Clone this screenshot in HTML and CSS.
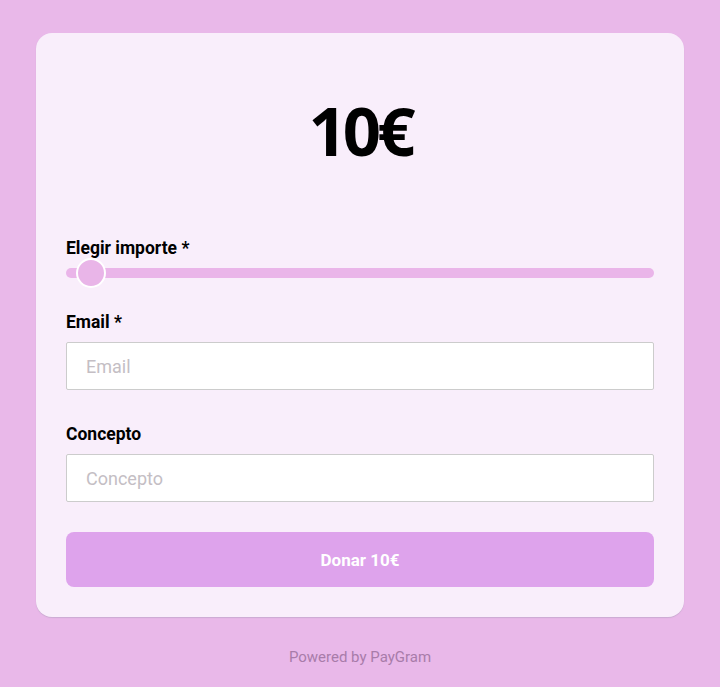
FILE: index.html
```html
<!DOCTYPE html>
<html lang="es">
<head>
    <meta charset="UTF-8">
    <meta name="viewport" content="width=device-width, initial-scale=1.0">
    <title>Donar</title>
    <link rel="stylesheet" href="styles.css">
</head>
<body>
    <div class="page">
        <form class="card">
            <h1 class="amount">10€</h1>

            <label class="field-label" for="importe">Elegir importe *</label>
            <input type="range" id="importe" class="slider" min="1" max="500" value="10">

            <label class="field-label" for="email">Email *</label>
            <input type="email" id="email" class="text-input" placeholder="Email">

            <label class="field-label" for="concepto">Concepto</label>
            <input type="text" id="concepto" class="text-input" placeholder="Concepto">

            <button type="button" class="donate-button">Donar 10€</button>
        </form>
        <p class="powered">Powered by PayGram</p>
    </div>
</body>
</html>
```

FILE: styles.css
```css
body {
    margin: 0;
    background-color: #e9b8e9;
    font-family: Roboto, "Liberation Sans", sans-serif;
}
.page {
    padding-top: 33px;
}
.card {
    display: flex;
    flex-direction: column;
    width: 648px;
    box-sizing: border-box;
    margin: 0 auto;
    padding: 61px 30px 30px;
    background-color: #f9eefb;
    border-radius: 16px;
    box-shadow: 0 1px 1px rgba(150, 150, 170, 0.35);
}
.amount {
    margin: 0 0 72px;
    font-family: "Noto Sans", "Open Sans", sans-serif;
    font-size: 67px;
    line-height: 72px;
    font-weight: 700;
    letter-spacing: -4px;
    text-align: center;
    color: #000;
}
.field-label {
    font-size: 17.5px;
    font-weight: 700;
    line-height: 20px;
    color: #000;
}
.slider {
    -webkit-appearance: none;
    appearance: none;
    width: 100%;
    height: 10px;
    margin: 10px 0 34px;
    background: #eab5e9;
    border-radius: 5px;
    outline: none;
}
.slider::-webkit-slider-thumb {
    -webkit-appearance: none;
    appearance: none;
    width: 30px;
    height: 30px;
    border-radius: 50%;
    background: #e9b5e8;
    border: 2px solid #fff;
    box-sizing: border-box;
    cursor: pointer;
}
.text-input {
    height: 48px;
    box-sizing: border-box;
    margin: 10px 0 34px;
    padding: 0 19px;
    font-family: Roboto, "Liberation Sans", sans-serif;
    font-size: 18px;
    border: 1px solid #cccccc;
    border-radius: 2px;
    background-color: #fff;
}
.text-input::placeholder {
    color: #c4bec4;
}
.text-input:last-of-type {
    margin-bottom: 30px;
}
.donate-button {
    height: 55px;
    font-family: Roboto, "Liberation Sans", sans-serif;
    font-size: 17px;
    font-weight: 700;
    color: #fff;
    background-color: #dea3ec;
    border: none;
    border-radius: 8px;
    cursor: pointer;
}
.powered {
    margin: 31px 0 0;
    text-align: center;
    font-size: 15px;
    color: #a87ca9;
}
```
